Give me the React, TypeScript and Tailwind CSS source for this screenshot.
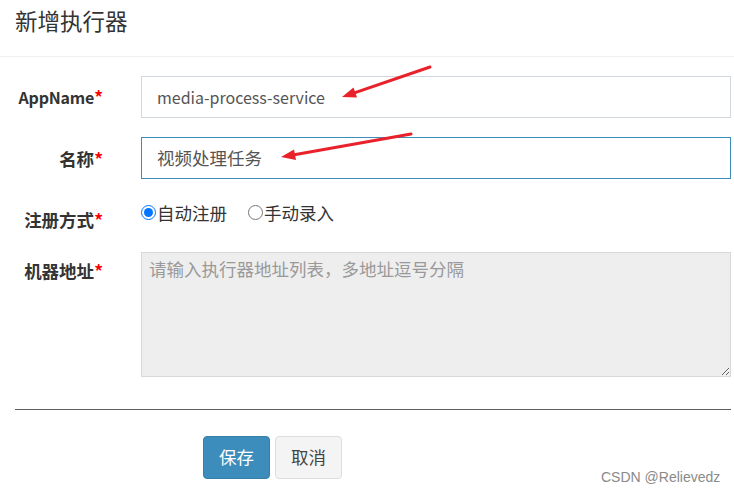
import React from "react";

const Label = ({ children, small }: { children: React.ReactNode; small?: boolean }) => (
  <label className="block w-[103px] shrink-0 text-right font-bold text-[17.5px] leading-[25px] text-[#333]">
    <span className={small ? "text-[16px] tracking-[-0.2px]" : ""}>{children}</span>
    <span className="text-[#ff0000]">*</span>
  </label>
);

export default function App() {
  return (
    <div className="relative w-[734px] h-[491px] overflow-hidden bg-white font-['Noto_Sans_CJK_SC','Noto_Sans',sans-serif] text-[#333]">
      <div className="h-[57px] border-b border-[#f0f0f0] px-[15px] pt-[5px]">
        <h4 className="text-[22.5px] leading-[30px] text-[#333]">新增执行器</h4>
      </div>

      <form className="pt-[19px] pr-[3px]" onSubmit={(e) => e.preventDefault()}>
        <div className="flex items-center h-[42px]">
          <Label small>AppName</Label>
          <div className="ml-[38px] flex-1 h-[42px] border border-[#d2d6de] flex items-center pl-[15px] text-[16px] text-[#555]">
            media-process-service
          </div>
        </div>

        <div className="flex items-center h-[42px] mt-[19px]">
          <Label>名称</Label>
          <div className="ml-[38px] flex-1 h-[42px] border border-[#3c8dbc] flex items-center pl-[15px] text-[17.5px] text-[#555]">
            视频处理任务
          </div>
        </div>

        <div className="flex items-start h-[35px] mt-[19px]">
          <div className="w-[103px] shrink-0 pt-[9px]">
            <Label>注册方式</Label>
          </div>
          <div className="ml-[38px] pt-[2px] flex items-center text-[17.5px] leading-[25px] text-[#333]">
            <label className="flex items-center">
              <input type="radio" name="t" defaultChecked className="m-0 w-[15px] h-[15px]" />
              <span className="ml-[1px]">自动注册</span>
            </label>
            <label className="flex items-center ml-[21px]">
              <input type="radio" name="t" className="m-0 w-[15px] h-[15px]" />
              <span className="ml-[1px]">手动录入</span>
            </label>
          </div>
        </div>

        <div className="flex items-start mt-[19px]">
          <div className="w-[103px] shrink-0 pt-[6px]">
            <Label>机器地址</Label>
          </div>
          <textarea
            readOnly
            placeholder="请输入执行器地址列表，多地址逗号分隔"
            className="ml-[38px] flex-1 h-[125px] border border-[#d8d8d8] bg-[#eeeeee] px-[7px] py-[3px] text-[17.5px] leading-[25px] text-[#555] placeholder:text-[#999] outline-none"
          />
        </div>

        <div className="ml-[15px] mt-[32px] border-t border-[#5e5e5e]" />

        <div className="flex pl-[203px] mt-[26px] gap-[5px]">
          <button className="w-[67px] h-[43px] rounded-[4px] bg-[#3c8dbc] border border-[#367fa9] text-white text-[17.5px]">
            保存
          </button>
          <button className="w-[67px] h-[43px] rounded-[4px] bg-[#f4f4f4] border border-[#dddddd] text-[#444] text-[17.5px]">
            取消
          </button>
        </div>
      </form>

      <div className="absolute left-[601px] top-[467px] font-['Liberation_Sans',Arial,sans-serif] text-[14px] leading-[20px] text-[#8a8a8a]">
        CSDN @Relievedz
      </div>

      <svg className="absolute inset-0 pointer-events-none" width="734" height="491">
        <g stroke="#e8212b" strokeWidth="3" strokeLinecap="round" fill="#e8212b">
          <line x1="430" y1="67" x2="350" y2="94.3" />
          <polygon points="342,97 357,97.5 353.5,87.5" stroke="none" />
          <line x1="411" y1="134" x2="290" y2="155.4" />
          <polygon points="281,157 296,160 294,149.5" stroke="none" />
        </g>
      </svg>
    </div>
  );
}
